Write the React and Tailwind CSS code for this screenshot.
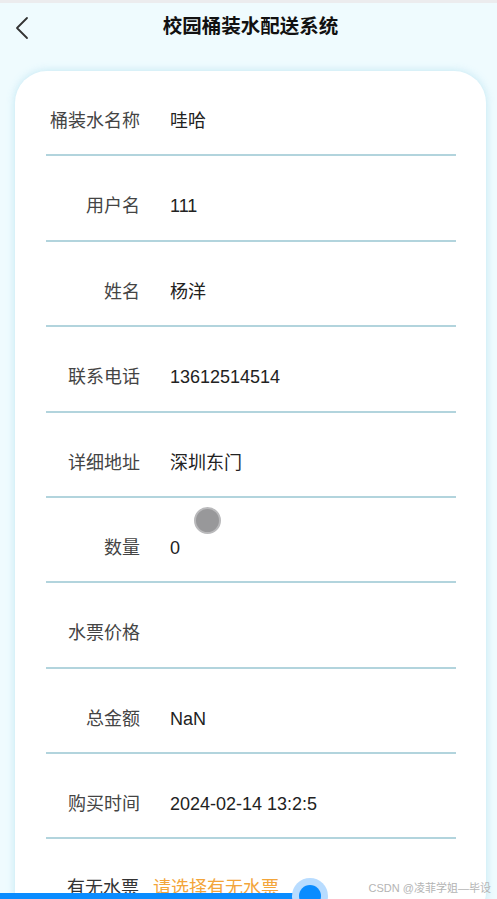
import React from "react";

const rows = [
  ["桶装水名称", "哇哈"],
  ["用户名", "111"],
  ["姓名", "杨洋"],
  ["联系电话", "13612514514"],
  ["详细地址", "深圳东门"],
  ["数量", "0"],
  ["水票价格", ""],
  ["总金额", "NaN"],
  ["购买时间", "2024-02-14 13:2:5"],
];

export default function App() {
  return (
    <div
      className="relative h-[899px] w-[497px] overflow-hidden bg-[#effbfe]"
      style={{ fontFamily: '"Liberation Sans", "Noto Sans CJK SC", sans-serif' }}
    >
      <div className="h-[3px] bg-[#ececee]" />
      <div className="relative flex h-[53px] items-center justify-center">
        <svg className="absolute left-[14px] top-[13px]" width="16" height="24" viewBox="0 0 16 24" fill="none">
          <path d="M13 2 L3 12 L13 22" stroke="#333" strokeWidth="1.8" strokeLinecap="round" strokeLinejoin="round" />
        </svg>
        <div className="-mt-[6px] ml-[4px] text-[19.5px] font-bold text-[#111]">校园桶装水配送系统</div>
      </div>
      <div className="ml-[15px] mt-[15px] w-[471px] rounded-[32px] bg-white pl-[31px] pr-[30px] shadow-[0_0_8px_rgba(180,225,240,0.8)]">
        {rows.map(([label, value]) => (
          <div key={label} className="flex h-[85.375px] items-start border-b-2 border-[#b2d4dd] pt-[38px]">
            <div className="w-[94px] shrink-0 whitespace-nowrap text-right text-[18px] leading-[24px] text-[#444]">{label}</div>
            <div className="ml-[30px] text-[18px] leading-[24px] text-[#222]">{value}</div>
          </div>
        ))}
        <div className="flex h-[85px] items-start pt-[37px]">
          <div className="ml-[21px] whitespace-nowrap text-[18px] leading-[24px] text-[#333]">有无水票</div>
          <div className="ml-[14px] whitespace-nowrap text-[18px] leading-[24px] text-[#f3a53a]">请选择有无水票</div>
        </div>
      </div>
      <div className="absolute left-[194px] top-[507px] h-[27px] w-[27px] rounded-full border-2 border-[#b9b9bb] bg-[#98989a]" />
      <div className="absolute bottom-0 left-0 h-[6px] w-[310px] bg-[#0a8cff]" />
      <div className="absolute left-[292px] top-[878px] h-[36px] w-[36px] rounded-full bg-[#b8dcff]" />
      <div className="absolute left-[299px] top-[885px] h-[22px] w-[22px] rounded-full bg-[#0a8cff]" />
      <div className="absolute right-[6px] top-[880px] text-[11px] text-[#b4b4b4]">CSDN @凌菲学姐—毕设</div>
    </div>
  );
}
